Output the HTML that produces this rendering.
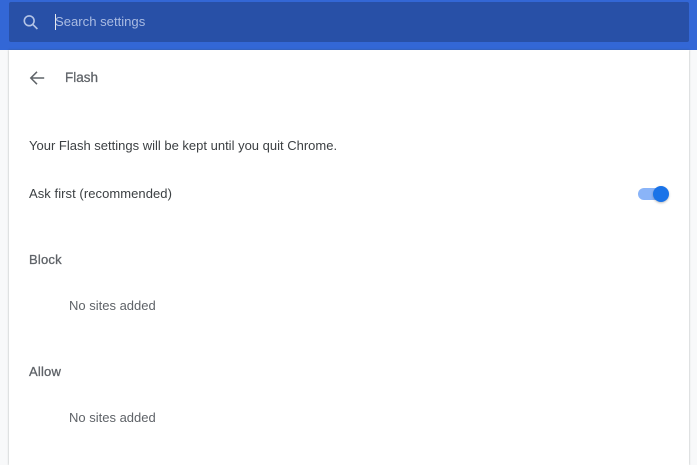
<!DOCTYPE html>
<html>
<head>
<meta charset="utf-8">
<style>
html,body{margin:0;padding:0;width:697px;height:465px;overflow:hidden;background:#f8f9fa;font-family:"Liberation Sans",sans-serif;}
.abs{position:absolute;white-space:nowrap;line-height:16px;}
#top{position:absolute;left:0;top:0;width:697px;height:50px;background:#3367d6;}
#search{position:absolute;left:9px;top:2px;width:680px;height:40px;background:#2850a7;border-radius:2px;}
#card{position:absolute;left:9px;top:50px;width:680px;height:415px;background:#fff;box-shadow:0 0 2px rgba(60,64,67,.4);}
.t{font-size:13px;color:#5f6368;}
.d{font-size:13px;color:#3c4043;}
.b{font-size:13px;color:#5f6368;-webkit-text-stroke:.3px #5f6368;letter-spacing:.2px;}
#track{position:absolute;left:638px;top:188px;width:24px;height:12px;border-radius:6px;background:#8ab4f8;}
#knob{position:absolute;left:653px;top:186px;width:16px;height:16px;border-radius:50%;background:#1a73e8;box-shadow:0 1px 2px rgba(60,64,67,.35);}
#caret{position:absolute;left:55px;top:14px;width:1px;height:16px;background:#e8eaed;}
</style>
</head>
<body>
<div id="top"></div>
<div id="search"></div>
<svg style="position:absolute;left:22px;top:13px" width="18" height="18" viewBox="0 0 18 18" fill="none" stroke="#b4c4e6" stroke-width="1.6"><circle cx="7.2" cy="7.8" r="4.9"/><path d="M10.8 11.4l4.6 4.6"/></svg>
<div id="caret"></div>
<div class="abs" style="left:55px;top:14px;font-size:13.1px;color:#a9bbe2;">Search settings</div>
<div id="card"></div>
<svg style="position:absolute;left:29px;top:70px" width="16" height="16" viewBox="0 0 16 16" fill="none" stroke="#5f6368" stroke-width="1.5"><path d="M15.2 8H2M8 1.8L1.8 8 8 14.2"/></svg>
<div class="abs" style="left:65px;top:70px;font-size:13.5px;color:#5f6368;-webkit-text-stroke:.25px #5f6368;">Flash</div>
<div class="abs d" style="left:29px;top:138px;">Your Flash settings will be kept until you quit Chrome.</div>
<div class="abs d" style="left:29px;top:186px;letter-spacing:.06px;">Ask first (recommended)</div>
<div id="track"></div>
<div id="knob"></div>
<div class="abs b" style="left:29px;top:252px;">Block</div>
<div class="abs t" style="left:69px;top:298px;">No sites added</div>
<div class="abs b" style="left:29px;top:364px;">Allow</div>
<div class="abs t" style="left:69px;top:410px;">No sites added</div>
</body>
</html>
